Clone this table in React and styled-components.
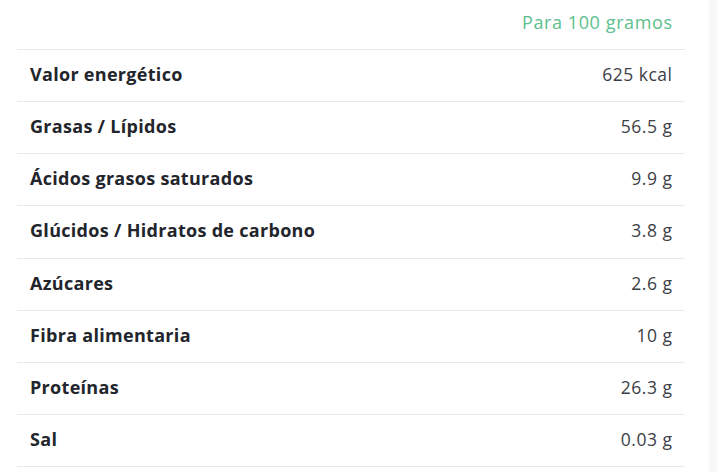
import React from 'react';
import styled, { createGlobalStyle } from 'styled-components';

const GlobalStyle = createGlobalStyle`
    html, body {
        margin: 0;
        padding: 0;
        background: #fff;
    }
    body {
        font-family: "Open Sans", "Liberation Sans", sans-serif;
    }
`;

const Page = styled.div`
    display: grid;
    grid-template-columns: 1fr 8px;
    width: 717px;
    height: 472px;
    overflow: hidden;
`;

const Gutter = styled.div`
    background: #f8f8f8;
`;

const Table = styled.div`
    display: flex;
    flex-direction: column;
    margin-left: 17px;
    width: 667px;
`;

const Header = styled.div`
    display: flex;
    justify-content: flex-end;
    align-items: center;
    box-sizing: border-box;
    height: 50px;
    padding: 0 12px 5px;
    border-bottom: 1px solid #e9e9e9;
    color: #5cc08e;
    font-size: 18px;
    letter-spacing: 0.6px;
    margin-right: -0.6px;
`;

const Row = styled.div`
    display: flex;
    justify-content: space-between;
    align-items: center;
    box-sizing: border-box;
    height: 52.15px;
    padding: 0 12px 3px 13px;
    border-bottom: 1px solid #e9e9e9;
`;

const Label = styled.span`
    color: #22252b;
    font-size: 18px;
    font-weight: 700;
    letter-spacing: 0.3px;
`;

const Value = styled.span`
    color: #3d4047;
    font-size: 17.5px;
    font-weight: 400;
    letter-spacing: 0.5px;
    margin-right: -0.5px;
`;

const rows = [
    ['Valor energético', '625 kcal'],
    ['Grasas / Lípidos', '56.5 g'],
    ['Ácidos grasos saturados', '9.9 g'],
    ['Glúcidos / Hidratos de carbono', '3.8 g'],
    ['Azúcares', '2.6 g'],
    ['Fibra alimentaria', '10 g'],
    ['Proteínas', '26.3 g'],
    ['Sal', '0.03 g'],
];

export default function App() {
    return (
        <Page>
            <GlobalStyle />
            <Table>
                <Header>Para 100 gramos</Header>
                {rows.map(([label, value]) => (
                    <Row key={label}>
                        <Label>{label}</Label>
                        <Value>{value}</Value>
                    </Row>
                ))}
            </Table>
            <Gutter />
        </Page>
    );
}
